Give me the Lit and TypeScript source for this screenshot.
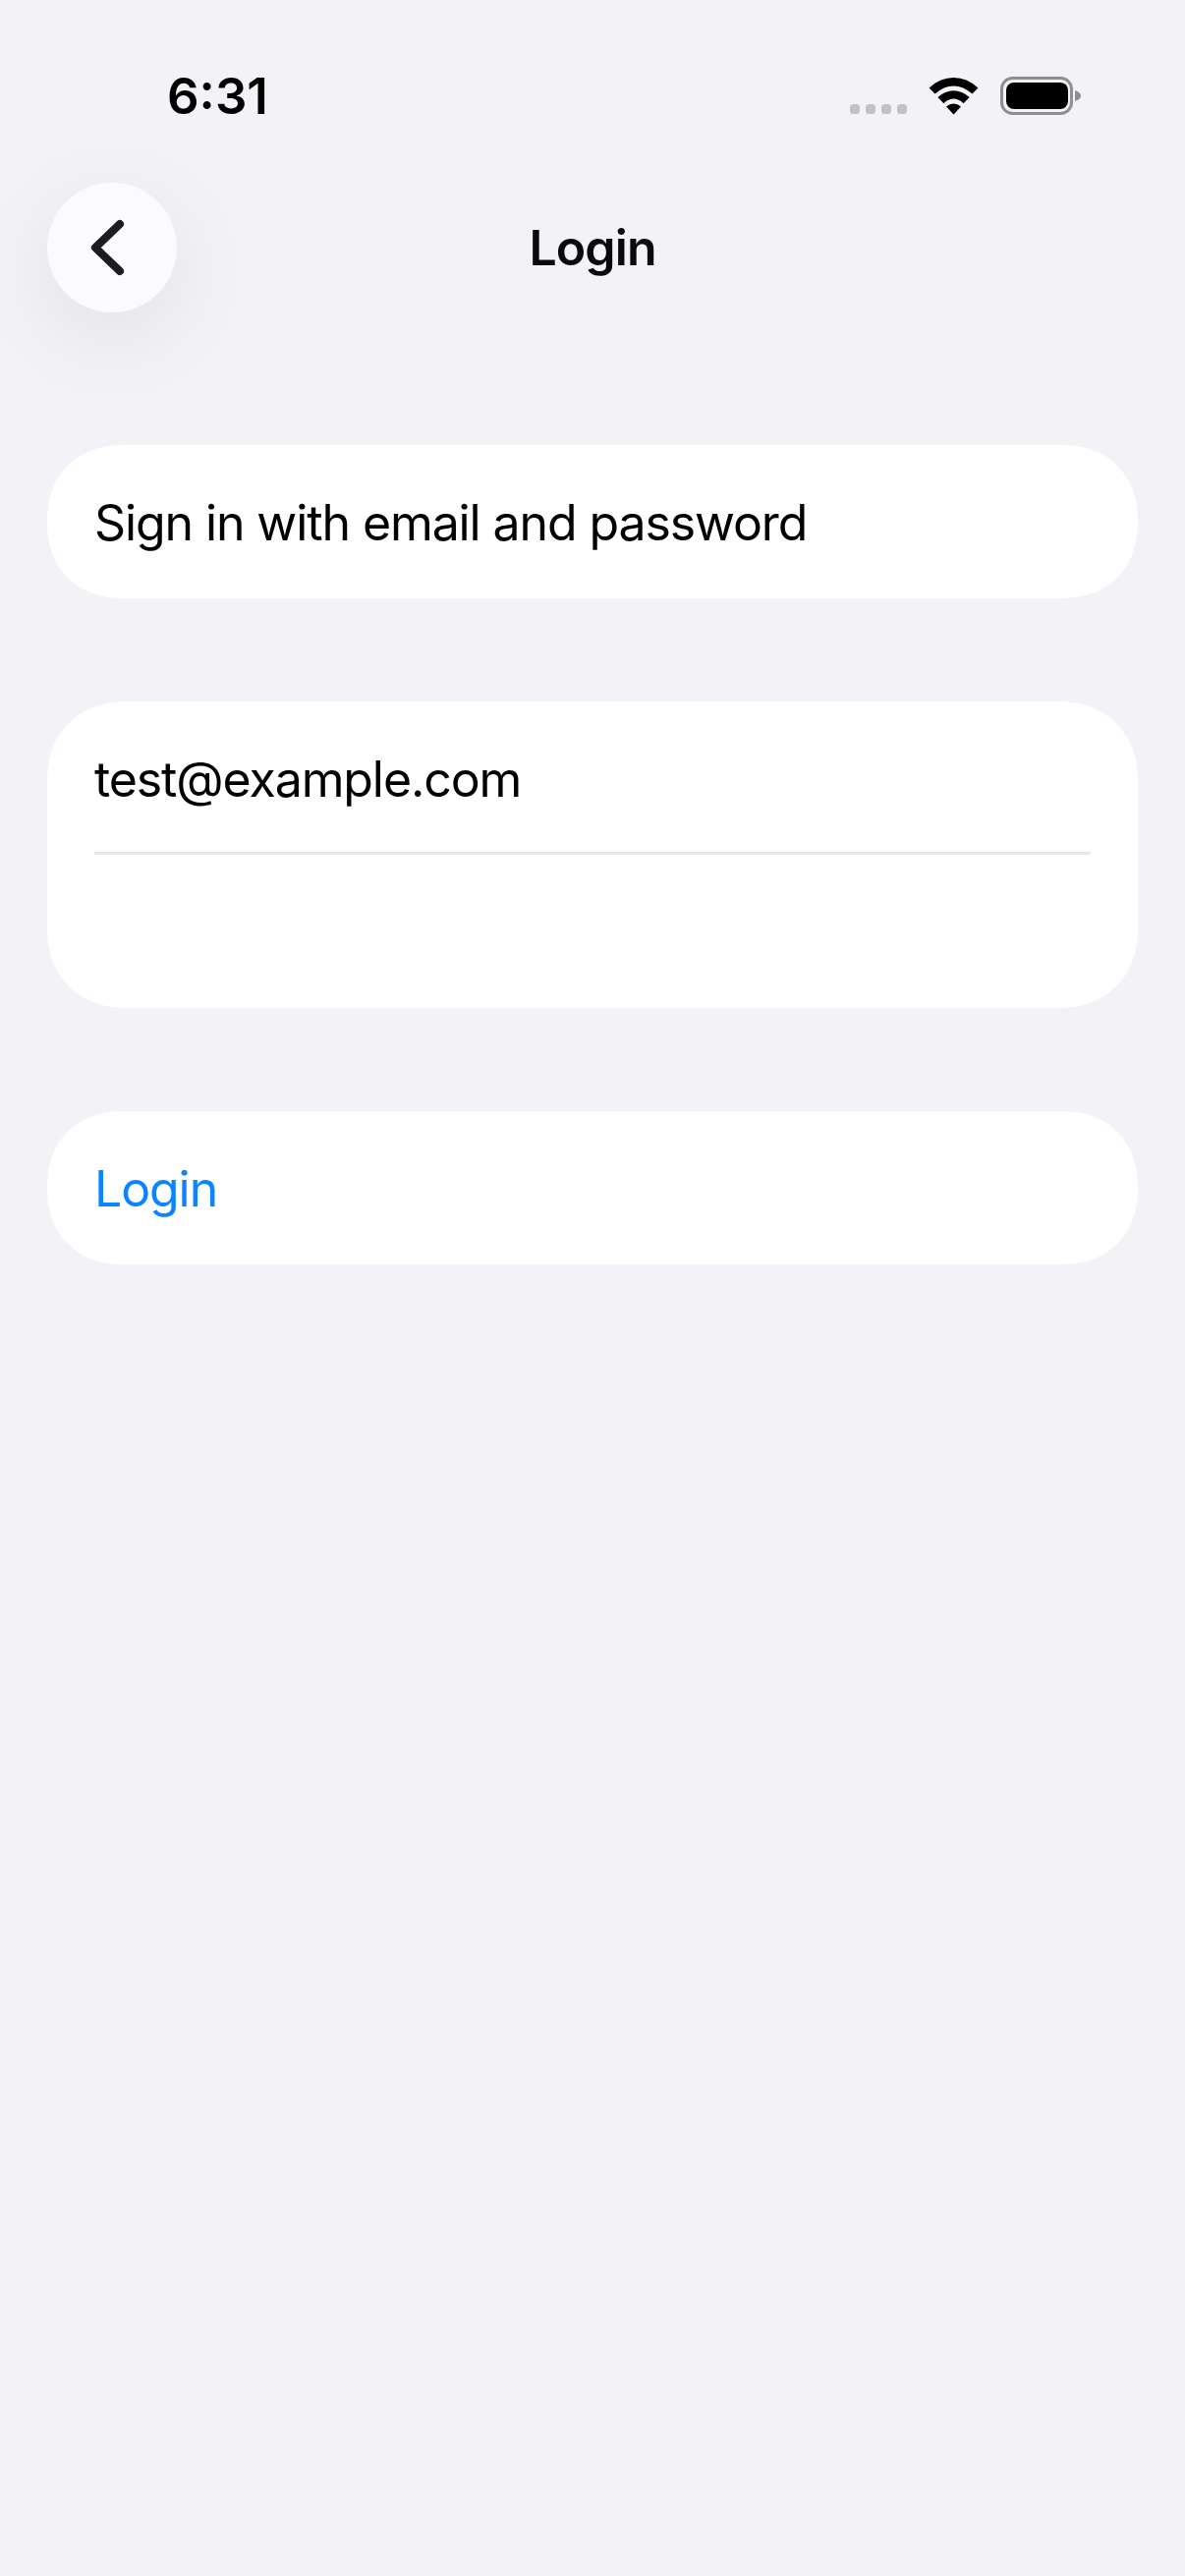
import { LitElement, html, css } from "lit";
import { customElement } from "lit/decorators.js";

@customElement("app-root")
export class AppRoot extends LitElement {
  static styles = css`
    :host {
      display: block;
      width: 1206px;
      min-height: 2622px;
      background: #f2f2f7;
      font-family: Inter, "Liberation Sans", sans-serif;
      color: #000;
    }
    .status {
      display: flex;
      justify-content: space-between;
      align-items: flex-end;
      height: 128px;
      padding: 0 106px 0 170px;
      box-sizing: border-box;
    }
    .time {
      font-size: 51px;
      font-weight: 600;
      line-height: 60px;
    }
    .icons {
      display: flex;
      align-items: flex-end;
      gap: 22px;
      padding-bottom: 11px;
    }
    .icons svg {
      display: block;
    }
    .nav {
      display: grid;
      grid-template-columns: 132px 1fr 132px;
      align-items: center;
      margin-top: 58px;
      padding: 0 48px;
    }
    .back {
      width: 132px;
      height: 132px;
      border-radius: 50%;
      background: #fbfbfe;
      box-shadow: 0 24px 90px rgba(0, 0, 0, 0.075);
      display: flex;
      align-items: center;
      justify-content: center;
    }
    .back svg {
      display: block;
    }
    .title {
      text-align: center;
      font-size: 50px;
      font-weight: 600;
      letter-spacing: -0.9px;
      line-height: 60px;
      color: #0a0a0a;
    }
    .list {
      display: flex;
      flex-direction: column;
      gap: 105px;
      margin-top: 135px;
      padding: 0 48px;
    }
    .card {
      background: #fff;
      border-radius: 82px;
      corner-shape: superellipse(1.15);
      padding: 0 48px;
    }
    .row {
      height: 156px;
      padding-top: 2px;
      display: flex;
      align-items: center;
      font-size: 50px;
      letter-spacing: -1.1px;
      box-sizing: border-box;
    }
    .first {
      height: 153px;
      padding-top: 5px;
    }
    .second {
      height: 159px;
      border-top: 3px solid #e5e5ea;
    }
    .link {
      color: #0a84ff;
    }
  `;

  render() {
    return html`
      <div class="status">
        <div class="time">6:31</div>
        <div class="icons">
          <svg width="58" height="39" viewBox="0 0 58 39">
            <rect x="0" y="28" width="10" height="10" rx="3.5" fill="#c0c0c5"></rect>
            <rect x="16" y="28" width="10" height="10" rx="3.5" fill="#c0c0c5"></rect>
            <rect x="32" y="28" width="10" height="10" rx="3.5" fill="#c0c0c5"></rect>
            <rect x="48" y="28" width="10" height="10" rx="3.5" fill="#c0c0c5"></rect>
          </svg>
          <svg width="51" height="39" viewBox="0 0 51 39">
            <path d="M0.6 11.4 Q12 1 25.5 1 Q39 1 50.4 11.4 L44.5 17.6 Q35.5 9.4 25.5 9.4 Q15.5 9.4 6.5 17.6 Z" fill="#000"></path>
            <path d="M9.4 21 Q17 14.2 25.5 14.2 Q34 14.2 41.6 21 L35.6 27.2 Q30.5 22.6 25.5 22.6 Q20.5 22.6 15.4 27.2 Z" fill="#000"></path>
            <path d="M18 30.6 Q21.5 27.6 25.5 27.6 Q29.5 27.6 33 30.6 L25.5 38.6 Z" fill="#000"></path>
          </svg>
          <svg width="82" height="39" viewBox="0 0 82 39">
            <rect x="1.5" y="1.5" width="71" height="36" rx="11" fill="none" stroke="#8e8e93" stroke-width="3"></rect>
            <rect x="6" y="6" width="63" height="27" rx="8" fill="#000"></rect>
            <path d="M76 14 Q82 16 82 19.5 Q82 23 76 25 Z" fill="#8e8e93"></path>
          </svg>
        </div>
      </div>

      <div class="nav">
        <div class="back">
          <svg width="44" height="60" viewBox="0 0 44 60">
            <path d="M30 6 L5 30 L30 54" fill="none" stroke="#1c1c22" stroke-width="8" stroke-linecap="round" stroke-linejoin="round"></path>
          </svg>
        </div>
        <div class="title">Login</div>
      </div>

      <div class="list">
        <div class="card">
          <div class="row">Sign in with email and password</div>
        </div>
        <div class="card">
          <div class="row first">test@example.com</div>
          <div class="row second"></div>
        </div>
        <div class="card">
          <div class="row link">Login</div>
        </div>
      </div>
    `;
  }
}
